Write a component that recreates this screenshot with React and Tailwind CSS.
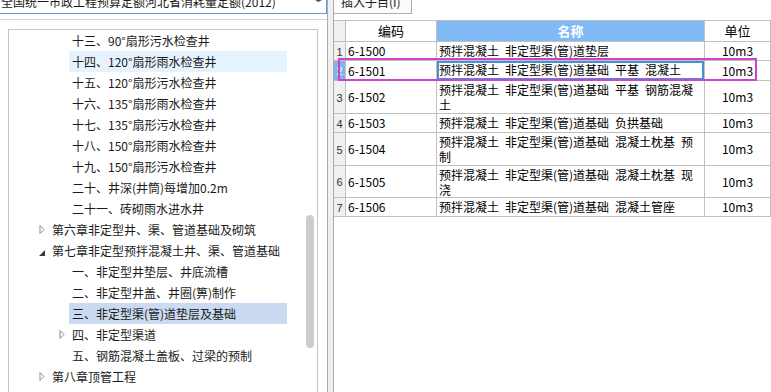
import React from 'react';

const tree = [
  { t: '十三、90°扇形污水检查井', lv: 2 },
  { t: '十四、120°扇形雨水检查井', lv: 2, hover: true },
  { t: '十五、120°扇形污水检查井', lv: 2 },
  { t: '十六、135°扇形雨水检查井', lv: 2 },
  { t: '十七、135°扇形污水检查井', lv: 2 },
  { t: '十八、150°扇形雨水检查井', lv: 2 },
  { t: '十九、150°扇形污水检查井', lv: 2 },
  { t: '二十、井深(井筒)每增加0.2m', lv: 2 },
  { t: '二十一、砖砌雨水进水井', lv: 2 },
  { t: '第六章非定型井、渠、管道基础及砌筑', lv: 1, arrow: 'closed' },
  { t: '第七章非定型预拌混凝土井、渠、管道基础', lv: 1, arrow: 'open' },
  { t: '一、非定型井垫层、井底流槽', lv: 2 },
  { t: '二、非定型井盖、井圈(箅)制作', lv: 2 },
  { t: '三、非定型渠(管)道垫层及基础', lv: 2, selected: true },
  { t: '四、非定型渠道', lv: 2, arrow: 'closed' },
  { t: '五、钢筋混凝土盖板、过梁的预制', lv: 2 },
  { t: '第八章顶管工程', lv: 1, arrow: 'closed' },
  { t: '第九章给排水构筑物', lv: 1, arrow: 'closed' },
];

const rows = [
  { n: 1, code: '6-1500', name: ['预拌混凝土 非定型渠(管)道垫层'], h: 'h-[19px]' },
  { n: 2, code: '6-1501', name: ['预拌混凝土 非定型渠(管)道基础 平基 混凝土'], h: 'h-[20px]', sel: true },
  { n: 3, code: '6-1502', name: ['预拌混凝土 非定型渠(管)道基础 平基 钢筋混凝', '土'], h: 'h-[33px]' },
  { n: 4, code: '6-1503', name: ['预拌混凝土 非定型渠(管)道基础 负拱基础'], h: 'h-[19px]' },
  { n: 5, code: '6-1504', name: ['预拌混凝土 非定型渠(管)道基础 混凝土枕基 预', '制'], h: 'h-[33px]' },
  { n: 6, code: '6-1505', name: ['预拌混凝土 非定型渠(管)道基础 混凝土枕基 现', '浇'], h: 'h-[32px]' },
  { n: 7, code: '6-1506', name: ['预拌混凝土 非定型渠(管)道基础 混凝土管座'], h: 'h-[19px]' },
];

const Arrow = ({ type }) => {
  if (type === 'open') {
    return (
      <svg width="6" height="6" viewBox="0 0 6 6" className="mt-[5px]">
        <path d="M6 0 L6 6 L0 6 Z" fill="#3a3a3a" />
      </svg>
    );
  }
  if (type === 'closed') {
    return (
      <svg width="6" height="9" viewBox="0 0 6 9">
        <path d="M1 0.5 L5 4.5 L1 8.5 Z" fill="#fff" stroke="#8c8c8c" strokeWidth="1" />
      </svg>
    );
  }
  return null;
};

const TreeRow = ({ item }) => {
  const bg = item.selected ? 'bg-[#CADAF0]' : item.hover ? 'bg-[#E5F3FF]' : '';
  return (
    <div className={`flex h-[21px] items-center ${item.lv === 1 ? 'pl-[28px]' : 'pl-[48px]'}`}>
      <span className="flex w-[10px] justify-center">
        <Arrow type={item.arrow} />
      </span>
      <span className={`ml-[2px] flex h-[21px] w-[218px] items-center whitespace-nowrap pl-[3px] ${bg}`}>
        {item.t}
      </span>
    </div>
  );
};

const App = () => {
  return (
    <div className="relative flex h-[392px] w-[771px] overflow-hidden bg-white font-['Noto_Sans_CJK_SC',sans-serif] text-[12px] text-[#1a1a1a]">
      {/* left: quota library + chapter tree */}
      <div className="flex w-[327px] shrink-0 flex-col">
        <div className="relative h-[14px] shrink-0 overflow-hidden border-r border-b border-[#5A9BE0]">
          <div className="-mt-[6px] whitespace-nowrap pl-[1px] leading-[16px]">
            全国统一市政工程预算定额河北省消耗量定额(2012)
          </div>
          <svg width="7" height="4" viewBox="0 0 7 4" className="absolute left-[315px] top-0">
            <path d="M0 0 L7 0 L3.5 2 Z" fill="#555" />
          </svg>
        </div>
        <div className="h-[6px] shrink-0 border-b border-[#D4D4D4]" />
        <div className="shrink-0 pt-[9px] pl-[8px]">
          <div className="relative h-[400px] w-[310px] border border-[#C6C6C6] bg-white">
            {tree.map((item, i) => (
              <TreeRow key={i} item={item} />
            ))}
            <div className="absolute top-[185px] right-[3px] h-[133px] w-[8px] rounded-full bg-[#CDCDCD]" />
          </div>
        </div>
      </div>

      {/* splitter */}
      <div className="w-[6px] shrink-0 border-l border-[#ABABAB] bg-[#F0F0F0]" />

      {/* right: sub-item table */}
      <div className="flex flex-1 flex-col border-l border-[#ABABAB]">
        <div className="h-[20px] shrink-0">
          <div className="h-[14px] w-[78px] overflow-hidden border-r border-b border-[#ADADAD] bg-[#FBFBFB]">
            <div className="-mt-[6px] pl-[7px] leading-[16px] whitespace-nowrap">插入子目(I)</div>
          </div>
        </div>

        <div className="shrink-0 border-t border-[#C0C0C0] text-black">
          <div className="flex h-[21px] border-b border-[#C0C0C0]">
            <div className="w-[12px] border-r border-[#C0C0C0] bg-[#F0F0F0]" />
            <div className="flex w-[91px] items-center justify-center border-r border-[#C0C0C0] text-[13px]">编码</div>
            <div className="flex w-[268px] items-center justify-center border-r border-[#C0C0C0] bg-[#80BAF6] text-[13px] font-bold text-white">
              名称
            </div>
            <div className="flex w-[66px] items-center justify-center border-r border-[#C0C0C0] text-[13px]">单位</div>
          </div>

          {rows.map((r) => (
            <div key={r.n} className={`flex border-b border-[#C0C0C0] ${r.h}`}>
              <div
                className={`flex w-[12px] items-center justify-center border-r border-[#C0C0C0] pt-[2px] font-['Liberation_Sans',sans-serif] text-[11px] ${
                  r.sel ? 'bg-[#7EB4EA] text-white' : 'bg-[#F0F0F0] text-[#333]'
                }`}
              >
                {r.n}
              </div>
              <div className="flex w-[91px] items-center border-r border-[#C0C0C0] pl-[2px]">{r.code}</div>
              <div
                className={`w-[268px] border-r border-[#C0C0C0] pt-[1px] pl-[2px] leading-[15px] whitespace-pre ${
                  r.sel ? 'shadow-[inset_0_0_0_2px_#4A8FDC]' : ''
                }`}
              >
                {r.name.map((line, i) => (
                  <div key={i}>{line.replace(/ /g, '\u2002')}</div>
                ))}
              </div>
              <div className="flex w-[66px] items-center justify-center border-r border-[#C0C0C0]">10m3</div>
            </div>
          ))}
        </div>
      </div>

      {/* annotation around the selected row */}
      <div className="pointer-events-none absolute top-[58px] left-[338px] h-[23px] w-[419px] border-2 border-[#CC44CC]" />
    </div>
  );
};

export default App;
